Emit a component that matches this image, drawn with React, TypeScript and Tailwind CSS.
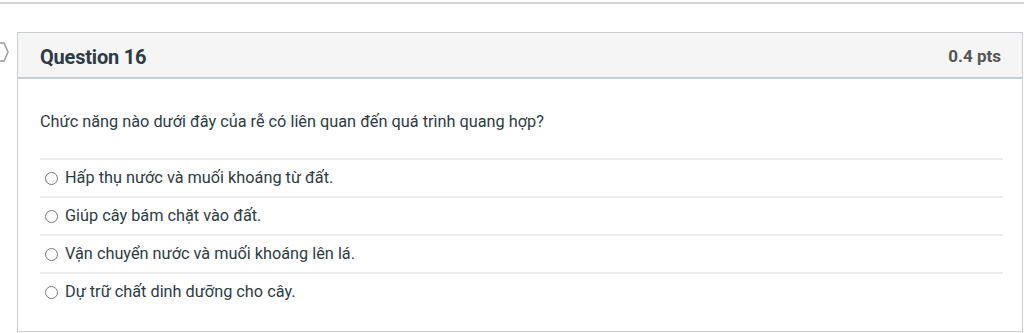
const answers = [
  "Hấp thụ nước và muối khoáng từ đất.",
  "Giúp cây bám chặt vào đất.",
  "Vận chuyển nước và muối khoáng lên lá.",
  "Dự trữ chất dinh dưỡng cho cây.",
];

const App = () => {
  return (
    <div className="w-[1024px] h-[333px] bg-white overflow-hidden font-['Roboto',sans-serif] relative">
      {/* top rule */}
      <div className="mt-[2px] h-[2px] bg-[#d6d6d6]" />

      {/* flag marker at left edge */}
      <svg className="absolute left-[-6px] top-[42px]" width="16" height="20" viewBox="0 0 16 20">
        <path d="M1 1 H10 L14 10 L10 19 H1" fill="none" stroke="#9a9a9a" strokeWidth="1.5" />
      </svg>

      <div className="ml-[17px] mr-[1px] mt-[28px] border border-[#c7cdd1] h-[300px]">
        {/* header */}
        <div className="h-[46px] bg-[#f5f5f5] border-b-2 border-[#c7cdd1] flex items-center justify-between pl-[22px] pr-[21px] pt-[3px]">
          <h2 className="text-[20px] font-bold text-[#2d3b45] tracking-[-0.2px]">Question 16</h2>
          <span className="text-[17px] font-bold text-[#555]">0.4 pts</span>
        </div>

        {/* body */}
        <div className="px-[22px] pt-[33px]">
          <p className="text-[16.3px] text-[#2d3b45] leading-[20px]">
            Chức năng nào dưới đây của rễ có liên quan đến quá trình quang hợp?
          </p>
          <div className="mt-[26px] mr-[-3px]">
            {answers.map((a) => (
              <div key={a} className="border-t-2 border-[#ececec] h-[38px] flex items-center pl-[5px] gap-[7px]">
                <span className="w-[13px] h-[13px] rounded-full border border-[#777] bg-white" />
                <span className="text-[16.3px] text-[#2d3b45]">{a}</span>
              </div>
            ))}
          </div>
        </div>
      </div>
    </div>
  );
};

export default App;
